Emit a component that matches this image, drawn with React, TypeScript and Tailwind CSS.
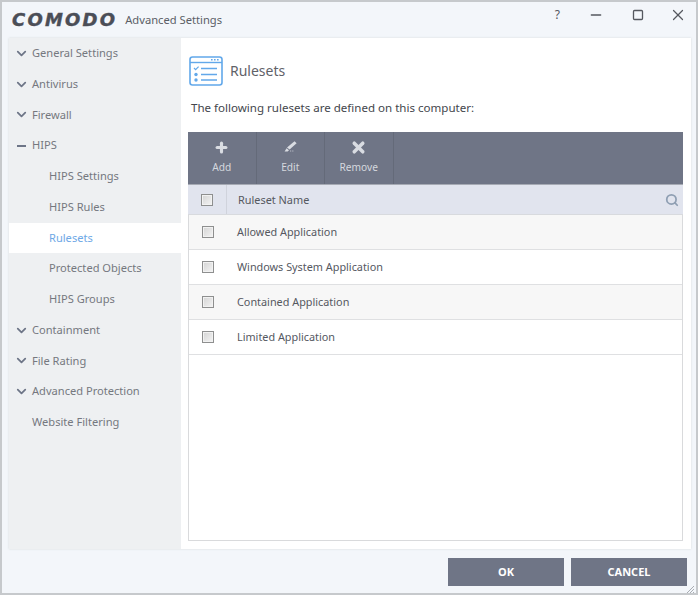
import { ChevronDown, Minus, Plus, Search, Square, X } from "lucide-react";

const FONT = "font-['Noto_Sans','Open_Sans',sans-serif]";

const navTop = [
  { label: "General Settings", icon: "chevron" },
  { label: "Antivirus", icon: "chevron" },
  { label: "Firewall", icon: "chevron" },
  { label: "HIPS", icon: "minus" },
];
const navHips = ["HIPS Settings", "HIPS Rules", "Rulesets", "Protected Objects", "HIPS Groups"];
const navBottom = [
  { label: "Containment", icon: "chevron" },
  { label: "File Rating", icon: "chevron" },
  { label: "Advanced Protection", icon: "chevron" },
  { label: "Website Filtering", icon: "" },
];
const rows = ["Allowed Application", "Windows System Application", "Contained Application", "Limited Application"];

function NavItem({ label, icon }: { label: string; icon: string }) {
  return (
    <div className="flex h-[30.75px] items-center text-[11.1px] text-[#75787f]">
      <span className="flex w-[23px] justify-center pl-[1px]">
        {icon === "chevron" && <ChevronDown size={15} strokeWidth={2.8} className="text-[#6d7587]" />}
        {icon === "minus" && <span className="h-[2px] w-[9px] bg-[#6d7587]" />}
      </span>
      <span>{label}</span>
    </div>
  );
}

function Checkbox() {
  return (
    <span className="block h-[12px] w-[12px] border border-[#8e8f8f] bg-gradient-to-br from-[#d4d4d4] to-[#f4f4f4] shadow-[inset_0_0_0_1px_#f2f2f2]" />
  );
}

function RulesetsIcon() {
  return (
    <svg width="34" height="30" viewBox="0 0 34 30" fill="none" stroke="#62a8ea" className="shrink-0">
      <rect x="1" y="1" width="32" height="28" rx="2.5" strokeWidth="1.6" fill="#fff" />
      <path d="M1 6.5h32" strokeWidth="1.4" />
      <path d="M22 3.8h1.6M25 3.8h1.6M28 3.8h1.6" strokeWidth="1.4" />
      <path d="M5 12l1.6 1.6L9.6 10.6" strokeWidth="1.2" />
      <path d="M12 12.5h16M12 18.5h16M12 24h16" strokeWidth="1.6" />
      <circle cx="7" cy="18.5" r="1.7" fill="#62a8ea" stroke="none" />
      <circle cx="7" cy="24" r="1.7" fill="#62a8ea" stroke="none" />
    </svg>
  );
}

function BrushIcon() {
  return (
    <svg width="13" height="12" viewBox="0 0 13 12" fill="currentColor" className="translate-y-[-1px]">
      <path d="M10.5 0.3L12.6 2.2 5.6 8.6 3 6.6z" />
      <path d="M2.6 7.2L5 9.2 3.6 10.4H0.6z" />
      <path d="M6 9.6h1.2v1H6zM8.2 9.6h1.2v1H8.2z" opacity="0.7" />
    </svg>
  );
}

function ToolButton({ label, children }: { label: string; children: React.ReactNode }) {
  return (
    <div className="flex h-full w-[68.5px] flex-col items-center border-r border-[#646a79] pt-[8px] text-[10.2px] text-[#d5d8de]">
      <span className="flex h-[15px] items-center text-[#d9dce2]">{children}</span>
      <span className="mt-[5px] leading-[15px]">{label}</span>
    </div>
  );
}

export default function App() {
  return (
    <div className={`${FONT} h-[597px] w-[700px] overflow-hidden bg-white`}>
      <div className="flex h-[595px] w-[698px] flex-col border-2 border-[#c6c9cc] bg-[#f3f6fa] pl-[7px] pr-[5px]">
        {/* title bar */}
        <div className="flex h-[36px] shrink-0 items-center">
          <span className="ml-[3px] font-['DejaVu_Sans',sans-serif] text-[18px] font-bold italic leading-none tracking-[2.2px] text-[#4b4e57] [-webkit-text-stroke:0.4px_#4b4e57]">
            COMODO
          </span>
          <span className="ml-[8px] text-[11.2px] text-[#5b5e66]">Advanced Settings</span>
          <div className="mb-[10px] ml-auto flex items-center text-[#55585f]">
            <span className="mr-[28px] text-[12px]">?</span>
            <Minus size={16} strokeWidth={2} className="mr-[27.5px]" />
            <Square size={12} strokeWidth={2.6} className="mr-[25px]" />
            <X size={18} strokeWidth={1.6} className="mr-[4.5px]" />
          </div>
        </div>

        {/* panel */}
        <div className="flex h-[511px] shrink-0 shadow-[0_0_2px_#d5d8db]">
          <div className="w-[172px] shrink-0 bg-[#eef0f2]">
            {navTop.map((item) => (
              <NavItem key={item.label} {...item} />
            ))}
            {navHips.map((label) => (
              <div
                key={label}
                className={`flex h-[30.75px] items-center pl-[40px] text-[11.1px] ${
                  label === "Rulesets" ? "bg-white text-[#6ea8e6]" : "text-[#75787f]"
                }`}
              >
                {label}
              </div>
            ))}
            {navBottom.map((item) => (
              <NavItem key={item.label} {...item} />
            ))}
          </div>

          <div className="flex min-w-0 flex-1 flex-col bg-white pl-[7px] pr-[8px]">
            <div className="mt-[18px] flex h-[30px] items-center pl-[1px]">
              <RulesetsIcon />
              <span className="mb-[2px] ml-[7px] text-[14px] text-[#5f6269]">Rulesets</span>
            </div>
            <p className="mt-[13px] pl-[3px] text-[11.55px] leading-[17px] text-[#44474d]">
              The following rulesets are defined on this computer:
            </p>
            <div className="mt-[16px] flex h-[409px] flex-col border-x border-b border-[#d9dadc]">
              <div className="-mx-px flex h-[53px] shrink-0 border-b border-[#a6aab4] bg-[#6f7586]">
                <ToolButton label="Add">
                  <Plus size={15} strokeWidth={5} />
                </ToolButton>
                <ToolButton label="Edit">
                  <BrushIcon />
                </ToolButton>
                <ToolButton label="Remove">
                  <X size={17} strokeWidth={5} />
                </ToolButton>
              </div>
              <div className="-mx-px flex h-[30px] shrink-0 items-center border-b border-[#d8dade] bg-[#e1e4ee] text-[10.9px] text-[#55585f]">
                <div className="flex h-full w-[39px] items-center border-r border-[#d0d3dc] pl-[13px]">
                  <Checkbox />
                </div>
                <span className="ml-[11px] pt-px">Ruleset Name</span>
                <Search size={14} strokeWidth={3} className="ml-auto mr-[4px] text-[#8f9fb3]" />
              </div>
              {rows.map((name, i) => (
                <div
                  key={name}
                  className={`flex h-[35px] shrink-0 items-center border-b border-[#dfe0e2] text-[10.85px] text-[#55585f] ${
                    i % 2 === 0 ? "bg-[#f7f7f7]" : "bg-white"
                  }`}
                >
                  <span className="ml-[13px]">
                    <Checkbox />
                  </span>
                  <span className="ml-[23px] pt-px">{name}</span>
                </div>
              ))}
            </div>
          </div>
        </div>

        {/* footer */}
        <div className="relative flex flex-1 items-start justify-end pr-[4px] pt-[9px]">
          <button className="h-[28px] w-[116px] bg-[#6f7586] text-[11px] font-bold text-white">OK</button>
          <button className="ml-[7px] h-[28px] w-[116px] bg-[#6f7586] text-[11px] font-bold text-white">CANCEL</button>
          <svg width="8" height="8" viewBox="0 0 8 8" stroke="#a9adb3" className="absolute bottom-[0px] right-[-3px]">
            <path d="M1 8L8 1M4 8l4-4M7 8l1-1" />
          </svg>
        </div>
      </div>
    </div>
  );
}
